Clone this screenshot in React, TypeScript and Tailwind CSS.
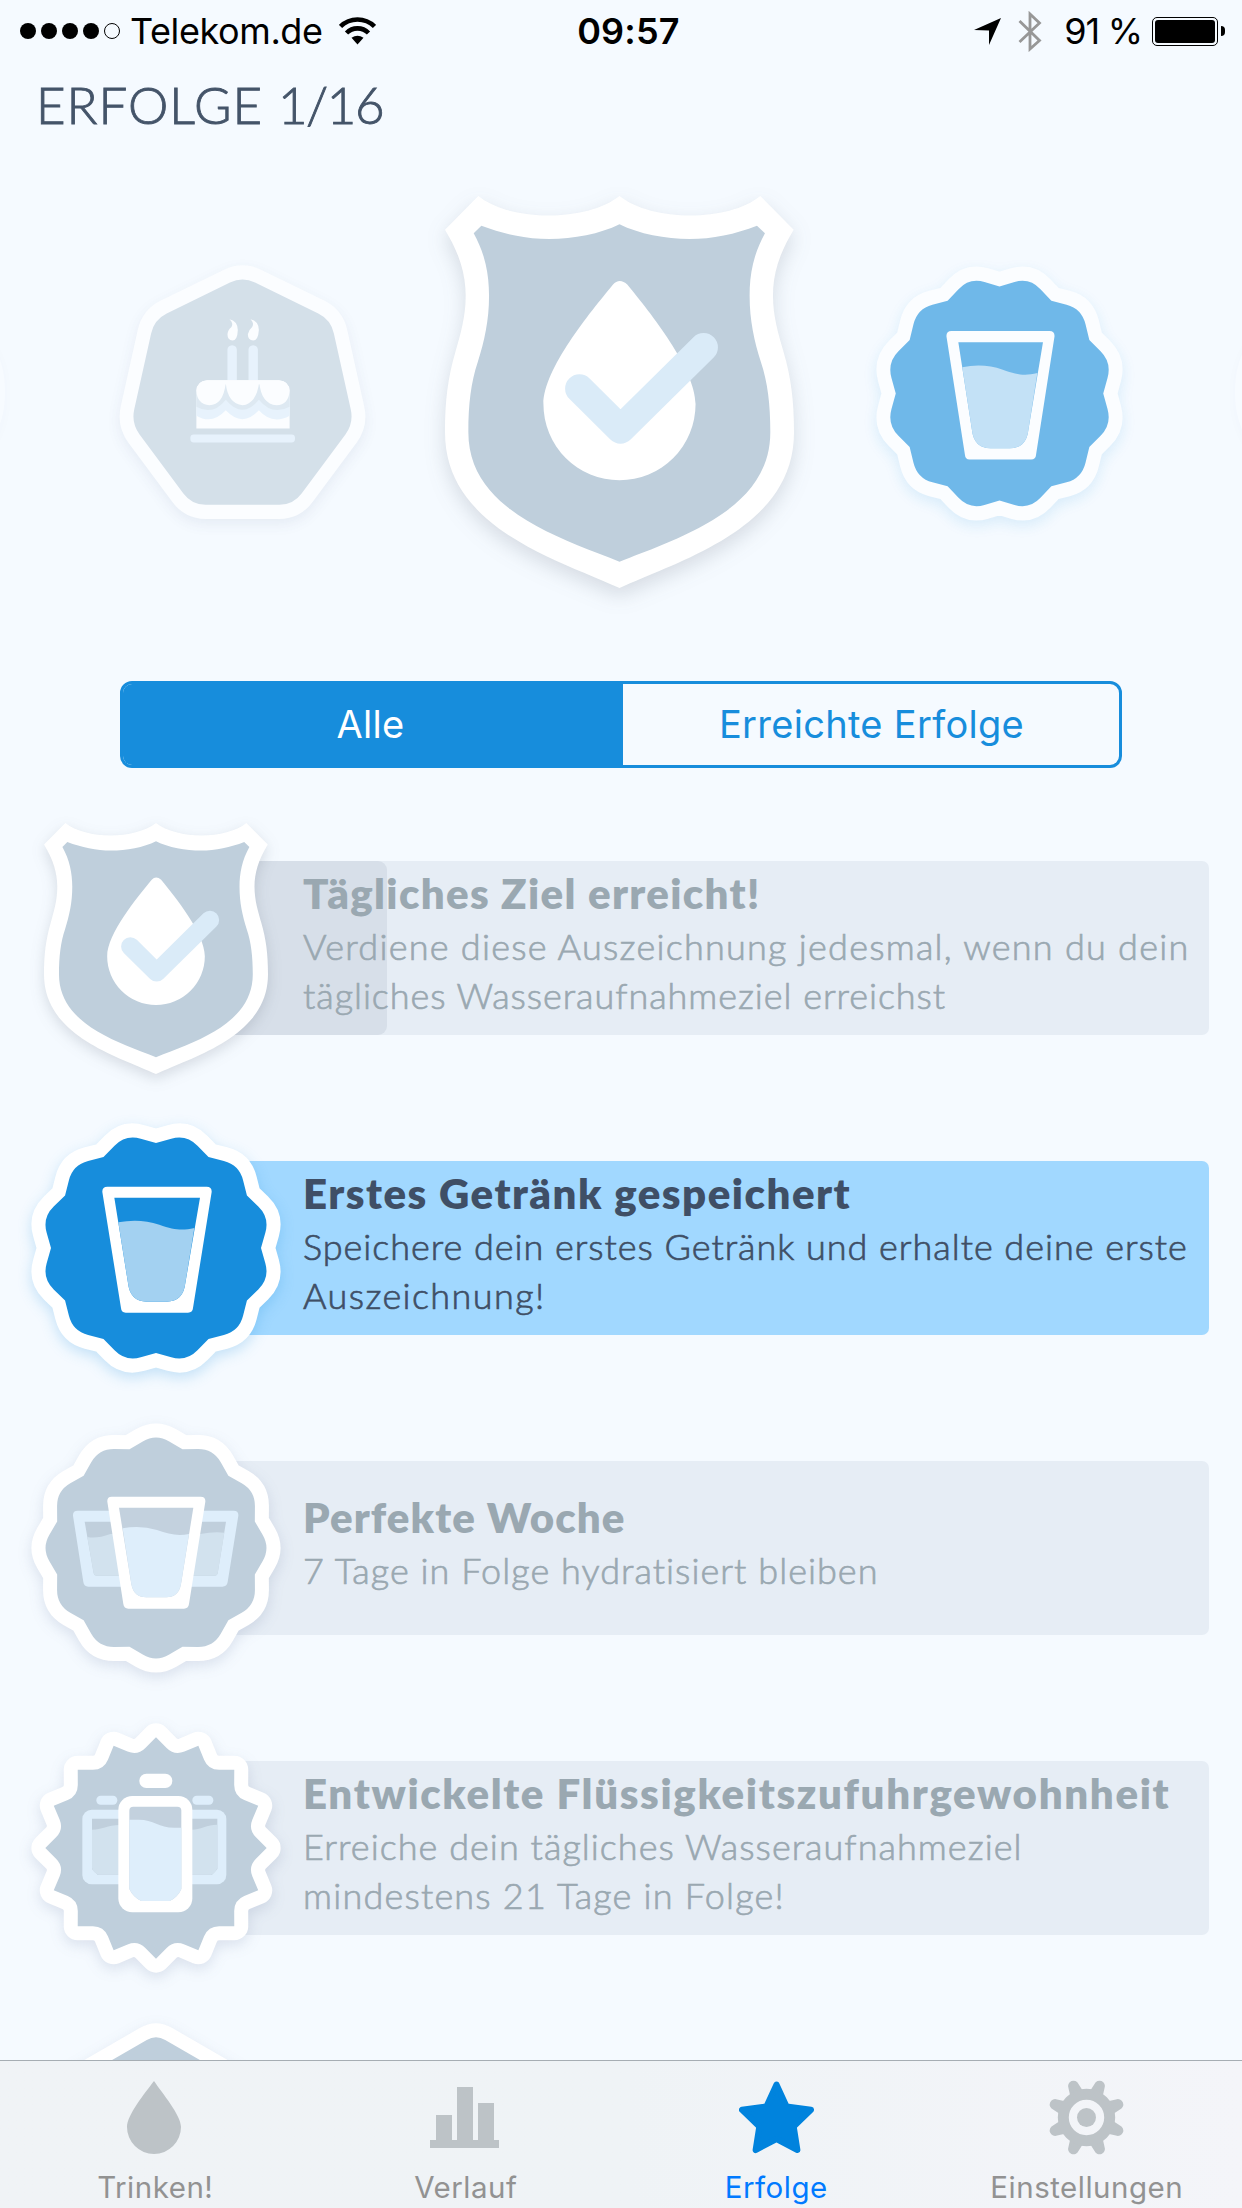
import { useState } from 'react';
import type { ReactNode } from 'react';
import clsx from 'clsx';

type BadgeKind = 'shield' | 'glass' | 'week' | 'bottles' | 'cake' | 'hexagon';

const GREY = '#bfcfdc';
const BLUE = '#178ddc';
const LIGHT = '#deeefb';

const point = (deg: number, r: number) => {
  const a = (deg * Math.PI) / 180;
  return [Math.sin(a) * r, -Math.cos(a) * r];
};

const mix = (p: number[], q: number[], t: number) => [p[0] + (q[0] - p[0]) * t, p[1] + (q[1] - p[1]) * t];

const fmt = (p: number[]) => `${p[0].toFixed(1)} ${p[1].toFixed(1)}`;

// 12 lobes with rounded tops, valleys start at the given angle
function scallop(start: number, inner: number, outer: number) {
  let d = `M${fmt(point(start, inner))}`;
  for (let i = 0; i < 12; i++) {
    const a = start + i * 30;
    const valley = point(a, inner);
    const peak = point(a + 15, outer);
    const next = point(a + 30, inner);
    d += `L${fmt(mix(valley, peak, 0.5))}Q${fmt(peak)} ${fmt(mix(next, peak, 0.5))}L${fmt(next)}`;
  }
  return d + 'Z';
}

// 16 sharp tips with softened valleys
function burst() {
  let d = `M${fmt(point(0, 332))}`;
  for (let i = 0; i < 16; i++) {
    const a = i * 22.5;
    const tip = point(a, 332);
    const valley = point(a + 11.25, 282);
    const next = point(a + 22.5, 332);
    d += `L${fmt(mix(tip, valley, 0.58))}Q${fmt(valley)} ${fmt(mix(next, valley, 0.58))}L${fmt(next)}`;
  }
  return d + 'Z';
}

function roundedPolygon(pts: number[][], radius: number) {
  let d = '';
  pts.forEach((p, i) => {
    const prev = pts[(i + pts.length - 1) % pts.length];
    const next = pts[(i + 1) % pts.length];
    const toward = (q: number[]) => mix(p, q, radius / Math.hypot(q[0] - p[0], q[1] - p[1]));
    d += `${i === 0 ? 'M' : 'L'}${fmt(toward(prev))}Q${fmt(p)} ${fmt(toward(next))}`;
  });
  return d + 'Z';
}

const shapes = {
  glass: scallop(0, 315, 353),
  week: scallop(15, 307, 343),
  bottles: burst(),
  cake: roundedPolygon(
    [[0, -341], [268, -214], [338, 92], [154, 333], [-154, 333], [-338, 92], [-268, -214]],
    42
  ),
  hexagon: roundedPolygon([0, 60, 120, 180, 240, 300].map((a) => point(a, 340)), 32),
};

function GlassArt({ color }: { color: string }) {
  return (
    <g>
      <path d="M-146-184H152Q168-184 167-168L111 180Q110 194 96 194H-91Q-104 194-105 180L-161-168Q-162-184-146-184Z" fill="#fff" />
      <path d="M-125-151H132L88 105Q82 161 31 161H-27Q-78 161-84 105Z" fill={color} />
      <path d="M-113-77Q-50-90 10-70C55-55 75-51 115-60L88 105Q82 161 31 161H-27Q-78 161-84 105Z" fill="#a3d1f1" />
    </g>
  );
}

function WeekArt() {
  return (
    <g transform="translate(-407 -412)">
      <path d="M172 300H640Q655 300 654 315L622 514Q620 528 606 528H204Q191 528 189 514L158 315Q157 300 172 300Z" fill={LIGHT} />
      <path d="M193 333H617L592 488Q591 495 584 495H228Q221 495 220 488Z" fill="#c0cfdc" />
      <path d="M201 379Q230 385 270 370H540Q580 362 612 366L592 488Q591 495 584 495H228Q221 495 220 488Z" fill="#d2e2ee" />
      <path d="M274 258H541Q556 258 555 273L506 580Q504 594 491 594H324Q311 594 309 580L261 273Q260 258 274 258Z" fill="#fff" />
      <path d="M296 291H519L482 520Q475 560 437 560H378Q340 560 333 520Z" fill="#c3d1de" />
      <path d="M307 353Q360 343 410 358C445 370 470 377 506 370L482 520Q475 560 437 560H378Q340 560 333 520Z" fill={LIGHT} />
    </g>
  );
}

function BottlesArt() {
  return (
    <g transform="translate(-407 -412)">
      <rect x="228" y="255" width="63" height="27" rx="13" fill={LIGHT} />
      <rect x="516" y="255" width="63" height="27" rx="13" fill={LIGHT} />
      <rect x="186" y="297" width="432" height="224" rx="28" fill={LIGHT} />
      <path d="M215 324H591V475L575 492H232L215 475Z" fill="#c0cfdc" />
      <path d="M215 357C245 357 260 344 300 343H514V357C540 357 560 342 591 342V472Q585 488 572 492H235Q219 487 215 472Z" fill="#d2e2ee" />
      <rect x="357" y="189" width="99" height="43" rx="21" fill="#fff" />
      <rect x="294" y="256" width="222" height="349" rx="42" fill="#fff" />
      <path d="M339 288H471Q483 288 483 300V535Q472 560 448 571H363Q339 560 327 535V300Q327 288 339 288Z" fill="#c3d1de" />
      <path d="M327 327H355C400 327 415 351 462 351H483V535Q472 560 448 571H363Q339 560 327 535Z" fill={LIGHT} />
    </g>
  );
}

function CakeArt() {
  return (
    <g transform="scale(1.015 .9855) translate(-456 -458)">
      <path d="M417 240Q441 245 442 272Q441 303 426 304Q411 303 411 285Q412 272 423 263Q430 252 417 240Z" fill="#fff" />
      <path d="M480 240Q504 245 505 272Q503 303 488 304Q472 303 472 285Q474 272 485 263Q492 252 480 240Z" fill="#fff" />
      <path d="M411 423V331Q412 319 425 318Q438 319 439 331V423ZM474 423V331Q475 319 488 318Q501 319 502 331V423Z" fill={LIGHT} />
      <path d="M318 455Q320 425 350 423H565Q595 425 597 455V567H318Z" fill="#fff" />
      <path d="M318 485L406 470L505 470L597 485V529Q545 558 505 513Q456 566 406 513Q365 557 318 529Z" fill={LIGHT} />
      <path d="M318 455L406 435L505 435L597 455V502Q545 530 505 481Q456 542 406 481Q368 530 318 502Z" fill="#cfdfea" />
      <path d="M350 423H565Q595 425 597 455Q594 496 558 498Q512 494 506 428Q498 493 456 498Q412 493 406 432Q398 497 357 498Q320 494 318 455Q320 425 350 423Z" fill="#fff" />
      <rect x="300" y="585" width="313" height="24" rx="10" fill={LIGHT} />
    </g>
  );
}

function Shield({ className }: { className?: string }) {
  return (
    <svg viewBox="75 76 1046 1176" preserveAspectRatio="none" className={clsx('overflow-visible', className)}>
      <path
        d="M175 76C270 154 500 154 598 76C696 154 925 154 1020 76L1120 177C1076 250 1058 310 1058 375C1058 440 1075 490 1090 545C1112 620 1121 690 1121 785C1121 1070 790 1165 598 1252C406 1165 75 1070 75 785C75 690 84 620 106 545C121 490 137 440 137 375C137 310 119 250 75 177Z"
        fill="#fff"
      />
      <path
        d="M184 165C250 190 320 205 388 205C460 205 540 190 598 161C656 190 736 205 808 205C876 205 946 190 1010 165L1034 188C1000 250 988 310 988 375C988 450 1002 510 1022 575C1042 635 1050 700 1050 785C1050 1010 800 1095 598 1173C396 1095 145 1010 145 785C145 700 153 635 173 575C193 510 207 450 207 375C207 310 195 250 161 188Z"
        fill={GREY}
      />
      <path d="M578 342Q598 320 622 342C690 425 826 595 826 700A228 229 0 0 1 370 700C370 595 510 425 578 342Z" fill="#fff" />
      <path d="M478 654L601 776L850 530" fill="none" stroke="#daebf8" strokeWidth="86" strokeLinecap="round" strokeLinejoin="round" />
    </svg>
  );
}

function Badge({ kind, className }: { kind: Exclude<BadgeKind, 'shield'>; className?: string }) {
  const color = kind === 'glass' ? BLUE : GREY;
  return (
    <svg viewBox="-375 -375 750 750" preserveAspectRatio="none" className={clsx('overflow-visible', className)}>
      <path d={shapes[kind]} fill="#fff" stroke="#fff" strokeWidth="84" strokeLinejoin="round" />
      <path d={shapes[kind]} fill={color} />
      {kind === 'glass' && <GlassArt color={color} />}
      {kind === 'week' && <WeekArt />}
      {kind === 'bottles' && <BottlesArt />}
      {kind === 'cake' && <CakeArt />}
    </svg>
  );
}

function StatusBar() {
  return (
    <div className="grid h-[62px] grid-cols-3 items-center pl-5 pr-[17px] font-[Inter] text-[36px] leading-[62px] text-black">
      <div className="flex items-center">
        <div className="flex gap-[5px]">
          {[0, 1, 2, 3].map((i) => (
            <span key={i} className="size-4 rounded-full bg-black" />
          ))}
          <span className="size-4 rounded-full border border-black" />
        </div>
        <span className="ml-[10px] tracking-[-0.4px]">Telekom.de</span>
        <svg viewBox="0 0 37 28" className="ml-[16px] h-7 w-[37px]">
          <g fill="none" stroke="#000" strokeWidth="4.6">
            <path d="M1.5 9.5A24 24 0 0 1 35.500 9.500" />
            <path d="M7.500 16A15.500 15.500 0 0 1 29.500 16" />
          </g>
          <path d="M12.500 20.800Q18.500 16.500 24.500 20.800L18.500 27.500Z" />
        </svg>
      </div>
      <div className="pl-[12px] text-center font-semibold tracking-[0.2px]">09:57</div>
      <div className="flex items-center justify-end">
        <svg viewBox="0 0 27 27" className="h-[27px] w-[27px]">
          <path d="M27 0L15 27V12.500L0 12Z" />
        </svg>
        <svg viewBox="0 0 24 41" className="ml-[17px] h-[41px] w-6">
          <path d="M1.500 10L21.500 29.500L12 38V3L21.500 12L1.500 31" fill="none" stroke="#979797" strokeWidth="2.800" />
        </svg>
        <span className="ml-[22px] whitespace-nowrap tracking-[-1.2px]">91 %</span>
        <div className="ml-[10px] flex h-[29px] w-[66px] rounded-[5px] border border-black p-[2px]">
          <div className="w-[61px] rounded-[3px] bg-black" />
        </div>
        <div className="ml-[3px] h-[10px] w-1 rounded-r-full bg-black" />
      </div>
    </div>
  );
}

interface Achievement {
  kind: BadgeKind;
  title: string;
  lines: string[];
  titleClass: string;
  lineClasses: string[];
  reached?: boolean;
  progress?: number;
}

const achievements: Achievement[] = [
  {
    kind: 'shield',
    title: 'Tägliches Ziel erreicht!',
    lines: ['Verdiene diese Auszeichnung jedesmal, wenn du dein', 'tägliches Wasseraufnahmeziel erreichst'],
    titleClass: 'tracking-[1.35px]',
    lineClasses: ['tracking-[1.25px]', 'tracking-[0.95px]'],
    progress: 231,
  },
  {
    kind: 'glass',
    title: 'Erstes Getränk gespeichert',
    lines: ['Speichere dein erstes Getränk und erhalte deine erste', 'Auszeichnung!'],
    titleClass: 'tracking-[1.5px]',
    lineClasses: ['tracking-[0.97px]', 'tracking-[1.4px]'],
    reached: true,
  },
  {
    kind: 'week',
    title: 'Perfekte Woche',
    lines: ['7 Tage in Folge hydratisiert bleiben'],
    titleClass: 'tracking-[1.1px]',
    lineClasses: ['tracking-[1.04px]'],
  },
  {
    kind: 'bottles',
    title: 'Entwickelte Flüssigkeitszufuhrgewohnheit',
    lines: ['Erreiche dein tägliches Wasseraufnahmeziel', 'mindestens 21 Tage in Folge!'],
    titleClass: 'tracking-[1.64px]',
    lineClasses: ['tracking-[1.04px]', 'tracking-[1.2px]'],
  },
  { kind: 'hexagon', title: '', lines: [], titleClass: '', lineClasses: [] },
];

function AchievementRow({ item }: { item: Achievement }) {
  return (
    <div className="flex h-[300px] shrink-0 items-center pl-[31px] pr-[33px]">
      <div className="relative z-10 flex size-[250px] shrink-0 items-center justify-center">
        {item.kind === 'shield' ? (
          <Shield className="h-[251px] w-[224px] drop-shadow-[0_5px_7px_rgba(60,70,90,0.17)]" />
        ) : (
          <Badge
            kind={item.kind}
            className={clsx(
              'size-[250px]',
              item.reached
                ? 'drop-shadow-[0_5px_7px_rgba(23,141,220,0.22)]'
                : 'drop-shadow-[0_5px_7px_rgba(60,80,130,0.14)]'
            )}
          />
        )}
      </div>
      <div
        className={clsx(
          'relative -ml-[125px] flex h-[174px] flex-1 flex-col justify-center overflow-hidden rounded-[7px] pl-[147px]',
          item.lines.length === 1 ? 'pb-[11px]' : 'pb-[9px]',
          item.reached ? 'bg-[#a1d8ff] text-[#3f4f66]' : 'bg-[#e6edf5] text-[#9aa8b1]'
        )}
      >
        {item.progress && (
          <div className="absolute inset-y-0 left-0 rounded-r-[9px] bg-[#d7dfe9]" style={{ width: item.progress }} />
        )}
        <h2 className={clsx('relative whitespace-nowrap pb-[2px] text-[42px] font-extrabold leading-[53px]', item.titleClass)}>
          {item.title}
        </h2>
        {item.lines.map((line, i) => (
          <p
            key={line}
            className={clsx(
              'relative whitespace-nowrap text-[36px] font-light leading-[49px] [-webkit-text-stroke:0.7px]',
              item.lineClasses[i]
            )}
          >
            {line}
          </p>
        ))}
      </div>
    </div>
  );
}

function DropIcon() {
  return (
    <svg viewBox="0 0 54 73" className="mr-[2px] h-[73px] w-[54px]" fill="currentColor">
      <path d="M27 0C35 12 54 34 54 46A27 27 0 0 1 0 46C0 34 18 12 27 0Z" />
    </svg>
  );
}

function ChartIcon() {
  return (
    <svg viewBox="0 0 69 61" className="mr-[2px] h-[61px] w-[69px]" fill="currentColor">
      <path d="M0 53H6V28H22V53H27V0H43V53H48V16H64V53H69V61H0Z" />
    </svg>
  );
}

function StarIcon() {
  return (
    <svg viewBox="0 0 75 73" className="h-[73px] w-[75px]" fill="currentColor" stroke="currentColor" strokeWidth="6" strokeLinejoin="round">
      <path d="M37.500 3.500L47.600 25.500L72 28.800L54.700 45.500L58.400 69L37.500 58L16.600 69L20.300 45.500L3 28.800L27.400 25.500Z" />
    </svg>
  );
}

function GearIcon() {
  return (
    <svg viewBox="-36.5 -36.5 73 73" className="h-[73px] w-[73px] overflow-visible">
      {[22.5, 67.5, 112.5, 157.5, 202.5, 247.5, 292.5, 337.5].map((a) => (
        <path key={a} d="M-7-25L-5.400-34A5.400 5.400 0 0 1 5.400-34L7-25Z" transform={`rotate(${a})`} fill="currentColor" />
      ))}
      <circle r="23.200" fill="none" stroke="currentColor" strokeWidth="11" />
      <circle r="9.500" fill="currentColor" />
    </svg>
  );
}

const tabs: { label: string; icon: ReactNode }[] = [
  { label: 'Trinken!', icon: <DropIcon /> },
  { label: 'Verlauf', icon: <ChartIcon /> },
  { label: 'Erfolge', icon: <StarIcon /> },
  { label: 'Einstellungen', icon: <GearIcon /> },
];

export default function App() {
  const [filter, setFilter] = useState('Alle');
  const [activeTab, setActiveTab] = useState('Erfolge');

  return (
    <div className="flex h-[2208px] w-[1242px] flex-col overflow-hidden bg-[#f5faff] font-[Lato,sans-serif]">
      <StatusBar />
      <h1 className="h-[88px] pl-[36px] text-[51px] font-light leading-[85px] tracking-[1px] text-[#445469] [-webkit-text-stroke:0.9px]">
        ERFOLGE <span className="tracking-[-1.4px]">1/16</span>
      </h1>

      <div className="-mx-[200px] flex h-[484px] shrink-0 items-center justify-center pr-[2px]">
        <div className="mr-[114px] h-[186px] w-[180px] rounded-full bg-white/20 shadow-[0_3px_12px_rgba(60,80,130,0.025)]" />
        <Badge kind="cake" className="h-[254px] w-[247px] opacity-60 drop-shadow-[0_5px_7px_rgba(60,80,130,0.14)]" />
        <Shield className="ml-[79px] mr-[82px] h-[392px] w-[349px] drop-shadow-[0_8px_10px_rgba(60,70,90,0.17)]" />
        <Badge kind="glass" className="mt-[2px] h-[255px] w-[247px] opacity-60 drop-shadow-[0_5px_7px_rgba(23,141,220,0.22)]" />
        <div className="ml-[112px] h-[186px] w-[180px] rounded-full bg-white/20 shadow-[0_3px_12px_rgba(60,80,130,0.025)]" />
      </div>

      <div className="mx-[120px] mt-[47px] flex h-[87px] shrink-0 overflow-hidden rounded-[12px] border-[3px] border-[#178ddc] font-[Inter] text-[38px] tracking-[0.3px]">
        {['Alle', 'Erreichte Erfolge'].map((name) => (
          <button
            key={name}
            onClick={() => setFilter(name)}
            className={clsx(
              'flex-1 basis-0',
              name === 'Alle' ? 'pr-[5px]' : 'pl-[1px]',
              filter === name ? 'bg-[#178ddc] text-white' : 'text-[#178ddc]'
            )}
          >
            {name}
          </button>
        ))}
      </div>

      <div className="mt-[30px] flex min-h-0 flex-1 flex-col overflow-hidden">
        {achievements.map((item) => (
          <AchievementRow key={item.kind} item={item} />
        ))}
      </div>

      <nav className="relative z-20 grid h-[148px] shrink-0 grid-cols-4 border-t border-[#a6adb3] bg-gradient-to-r from-[#f0f3f6] via-[#eff3f6] to-[#f4f5f9] font-[Inter]">
        {tabs.map((tab) => (
          <button
            key={tab.label}
            onClick={() => setActiveTab(tab.label)}
            className={clsx(
              'flex flex-col items-center pt-5',
              activeTab === tab.label ? 'text-[#0083dd]' : 'text-[#bdc3c7]'
            )}
          >
            <span className="flex h-[73px] items-center">{tab.icon}</span>
            <span
              className={clsx(
                'mt-[14px] text-[29.5px] leading-[38px] tracking-[0.5px]',
                activeTab === tab.label ? 'text-[#007aff]' : 'text-[#929292]'
              )}
            >
              {tab.label}
            </span>
          </button>
        ))}
      </nav>
    </div>
  );
}
